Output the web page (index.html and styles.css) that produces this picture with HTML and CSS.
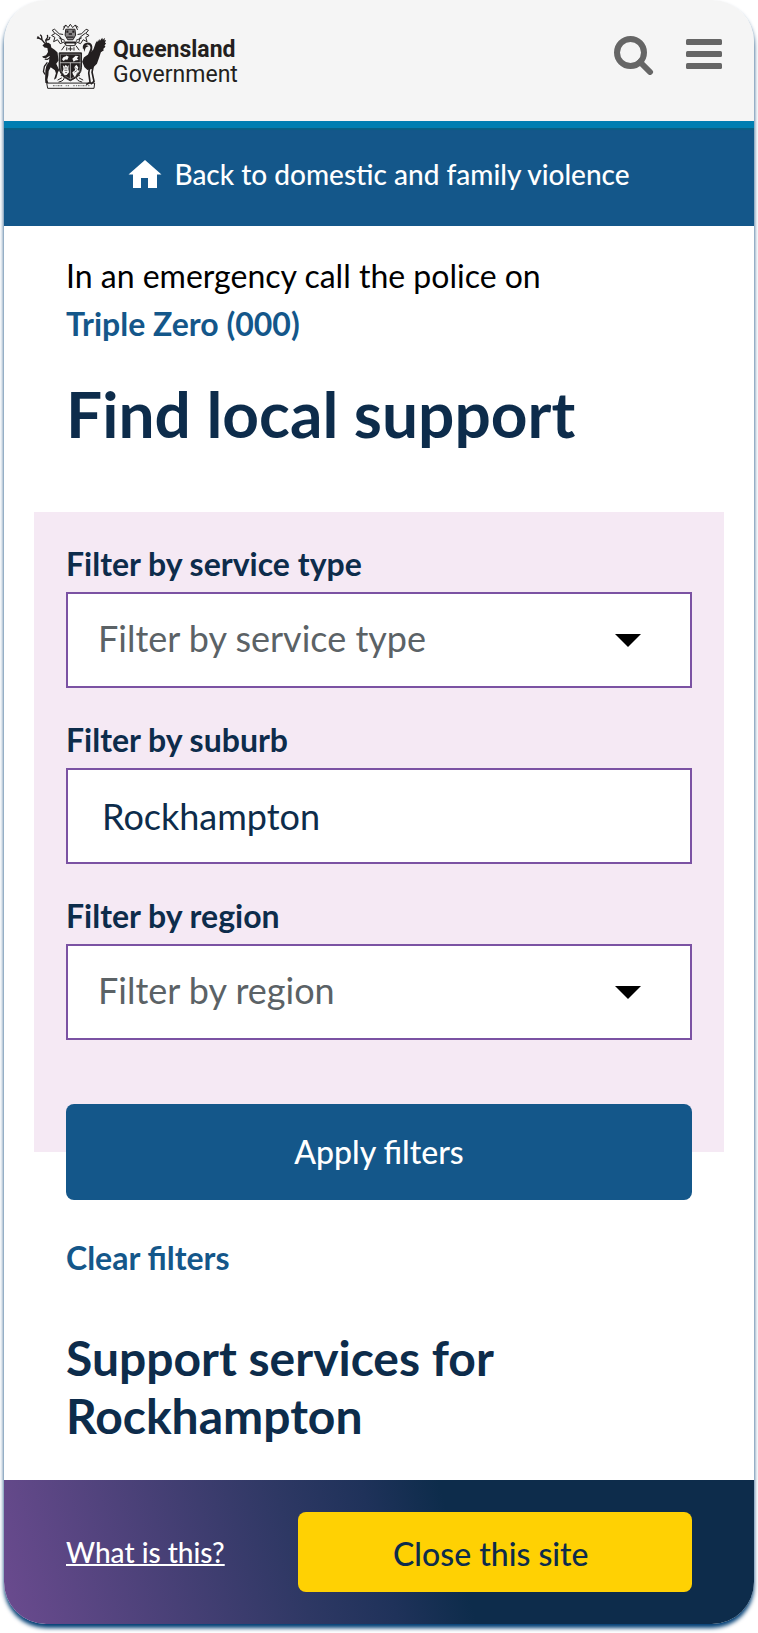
FILE: index.html
```html
<!DOCTYPE html>
<html lang="en">
<head>
  <meta charset="UTF-8">
  <meta name="viewport" content="width=device-width, initial-scale=1.0">
  <title>Find local support</title>
  <link rel="stylesheet" href="styles.css">
</head>
<body>
<div class="page">
  <header class="header">
    <a class="logo" href="#">
      <svg class="crest" viewBox="16 20 216 204" aria-hidden="true">
        <!-- crest and mantling -->
        <g fill="none" stroke="#231f20" stroke-width="3">
          <path d="M97 44l8-15 7 8 7-10 7 10 8-8 7 15M105 30l-8 6M134 30l9 6"/>
          <path d="M105 42h28l2 18-8 14h-16l-8-14z" fill="#8a8788"/>
          <path d="M97 58l-12-2-14-14-7 3 8 10-10 6 10 6-4 13 12-6 8 12 14-6 4 8M141 58l12-2 14-14 7 3-8 10 10 6-10 6 4 13-12-6-8 12-14-6-4 8"/>
          <path d="M73 54l16 12 4 16M165 54l-16 12-4 16M84 68l18 8M154 68l-18 8"/>
          <path d="M101 84h36l-5 8h-26zM102 92l-10 14M136 92l10 14M108 97v10M119 94v14M130 97v10M112 102h14"/>
        </g>
        <path d="M107 46h6v7h-6zM125 46h6v7h-6zM114 54h10v5h-10zM109 64h20v4h-20zM103 79h32v5h-32z" fill="#231f20"/>
        <!-- red deer -->
        <g fill="none" stroke="#231f20" stroke-width="4">
          <path d="M42 86l-9-11-8-5-6-6M33 75l-2-12-4-4M25 70l-8-1M46 85l-2-10 6-8-1-8M46 75l8-2 3-7"/>
        </g>
        <path d="M34 91l9-7 9-1 7 5 2 10 11 7 8 8 3 24-7 10 9 19-4 8-5 17-7 5 6-20-3-9-13-9-6 11-1 13-3 14 3 10h-9l-1-11 1-28 3-14 8-12 2-18-12 7-8-1-3-4 12-4 6-10-2-12-9-1z" fill="#231f20"/>
        <path d="M49 143l-9 12-3 16 5 9M61 126l-12 8-8-1" fill="none" stroke="#231f20" stroke-width="4"/>
        <!-- brolga -->
        <path d="M160 101q-2-13 9-15 12-2 14 10 1 8-4 16-5 9-1 15" fill="none" stroke="#231f20" stroke-width="6"/>
        <path d="M159 96l6-6 10 3-9 5-5 13z" fill="#231f20"/>
        <path d="M174 118l15-14 7-20 5-8 1 6 5-10 2 5 7-9 2 6 6-6-1 8 5-1-4 8 4 1-5 8 3 3-7 7 2 4-9 6-5 15-7 20-16 16-13 3-9-8-7-17 5-13z" fill="#231f20"/>
        <path d="M178 154l-3 22 4 28-12 6M189 151l-4 22 6 28-10 8" fill="none" stroke="#231f20" stroke-width="5"/>
        <!-- shield -->
        <path d="M85 114h68v44q0 26-34 41-34-15-34-41z" fill="#231f20" stroke="#231f20" stroke-width="3"/>
        <path d="M89 118h60v38q0 23-30 38-30-15-30-38z" fill="none" stroke="#999" stroke-width="2"/>
        <path d="M88 144h62M119 144v50" stroke="#f5f5f5" stroke-width="2"/>
        <path d="M94 135q2-10 10-10l3-3 7 4-4 9-7-1-4 5zM125 132l10-9 9 1-5 6 5 6-10 1-5 4z" fill="#f5f5f5"/>
        <path d="M96 151l5 5 4-6 5 6 4-5-1 12 2 10-7 8h-7l-6-8 3-10zM127 180l-2-7 9-7-3-8 6-8 6 8-2 8 6 3-8 7-6 12z" fill="#f5f5f5"/>
        <path d="M101 160h9M101 167h9M103 174h6M133 158l7 7M131 173l8-5" stroke="#231f20" stroke-width="2"/>
        <!-- scroll -->
        <g fill="none" stroke="#231f20" stroke-width="3">
          <path d="M83 203q18-4 17-14-1-7-10-6M80 197l13-7M155 203q-18-4-17-14 1-7 10-6M158 197l-13-7"/>
          <path d="M47 206h146l-2 16H50z"/>
          <path d="M66 214h5M74 214h3M80 214h6M89 214h5M105 214h3M111 214h4M128 214h4M136 214h3M142 214h5M150 214h3M156 214h6M165 214h4M173 214h4" stroke="#777" stroke-width="4"/>
        </g>
      </svg>
      <span class="logo-text">
        <strong>Queensland</strong>
        <span>Government</span>
      </span>
    </a>
    <div class="header-actions">
      <button class="icon-button" type="button" aria-label="Search">
        <svg width="40" height="40" viewBox="0 0 40 40" fill="none" stroke="#666" stroke-width="6" aria-hidden="true">
          <circle cx="16.500" cy="17.500" r="13.500"/>
          <path d="M26 27l10 10" stroke-linecap="round"/>
        </svg>
      </button>
      <button class="icon-button" type="button" aria-label="Menu">
        <svg width="36" height="40" viewBox="0 0 36 40" fill="#666" aria-hidden="true">
          <rect y="4" width="36" height="6" rx="1.500"/>
          <rect y="16" width="36" height="6" rx="1.500"/>
          <rect y="28" width="36" height="6" rx="1.500"/>
        </svg>
      </button>
    </div>
  </header>

  <nav class="back-bar">
    <a class="back-link" href="#">
      <svg width="34" height="30" viewBox="0 0 34 30" aria-hidden="true">
        <path d="M17 1L.5 15.500H5V29h8V19h7v10h9V15.500h4.500z" fill="#fff"/>
      </svg>
      Back to domestic and family violence
    </a>
  </nav>

  <main class="main">
    <p class="emergency">In an emergency call the police on<br><a href="tel:000">Triple Zero (000)</a></p>
    <h1>Find local support</h1>

    <form class="filters">
      <div class="field">
        <label for="service">Filter by service type</label>
        <div class="select-wrap">
          <select id="service">
            <option>Filter by service type</option>
          </select>
          <svg class="arrow" viewBox="0 0 26 13" aria-hidden="true"><path d="M0 0h26L13 13z"/></svg>
        </div>
      </div>
      <div class="field">
        <label for="suburb">Filter by suburb</label>
        <input type="text" id="suburb" value="Rockhampton">
      </div>
      <div class="field">
        <label for="region">Filter by region</label>
        <div class="select-wrap">
          <select id="region">
            <option>Filter by region</option>
          </select>
          <svg class="arrow" viewBox="0 0 26 13" aria-hidden="true"><path d="M0 0h26L13 13z"/></svg>
        </div>
      </div>
      <button class="apply" type="submit">Apply filters</button>
    </form>

    <a class="clear" href="#">Clear filters</a>
    <h2>Support services for Rockhampton</h2>
  </main>

  <footer class="exit-bar">
    <a href="#">What is this?</a>
    <button class="close-site" type="button">Close this site</button>
  </footer>
</div>
</body>
</html>
```
FILE: styles.css
```css
* {
    box-sizing: border-box;
}
body {
    margin: 0;
    padding: 0 4px 9px;
    background: #fff;
    color: #000;
    font-family: Lato, "Liberation Sans", sans-serif;
    font-size: 32px;
}
.page {
    border-radius: 42px;
    overflow: hidden;
    background: #fff;
    box-shadow: 0 4px 4px #003e74;
}
button, input, select {
    font-family: inherit;
}

/* header */
.header {
    display: flex;
    justify-content: space-between;
    align-items: flex-start;
    padding: 22px 32px 32px;
    background: #f5f5f5;
    border-bottom: 7px solid #007eb1;
}
.logo {
    display: flex;
    gap: 5px;
    color: #231f20;
    text-decoration: none;
}
.crest {
    width: 72px;
    height: 67px;
}
.logo-text {
    display: flex;
    flex-direction: column;
    padding-top: 15px;
    font-family: Roboto, "Open Sans", sans-serif;
    font-size: 23px;
    line-height: 25px;
}
.header-actions {
    display: flex;
    gap: 32px;
    padding-top: 13px;
}
.icon-button {
    padding: 0;
    border: 0;
    background: none;
}
.icon-button svg {
    display: block;
}

.back-bar {
    display: flex;
    justify-content: center;
    padding: 29px 32px 35px;
    background: #14578a;
    box-shadow: inset 0 2px 1px #0a5f83;
}
.back-link {
    display: flex;
    align-items: center;
    gap: 12px;
    color: #fff;
    font-size: 28px;
    font-weight: 500;
    line-height: 34px;
    text-decoration: none;
}

/* content */
.main {
    padding: 26px 30px 35px;
    color: #0d2c4b;
}
.emergency, h1, h2, .clear {
    margin: 0 32px;
}
.emergency {
    color: #000;
    line-height: 48px;
}
.emergency a, .clear {
    color: #14578a;
    font-weight: bold;
    text-decoration: none;
}
h1 {
    margin-top: 27px;
    font-size: 64px;
    line-height: 78px;
}
h2 {
    margin-top: 52px;
    font-size: 48px;
    line-height: 58px;
}
.filters {
    display: flex;
    flex-direction: column;
    gap: 33px;
    margin-top: 59px;
    padding: 33px 32px 0;
    background: #f5e9f4;
}
.field {
    display: flex;
    flex-direction: column;
    gap: 9px;
}
label {
    font-weight: bold;
    line-height: 38px;
}
input, select {
    display: block;
    width: 100%;
    height: 96px;
    border: 2px solid #7b52a3;
    border-radius: 0;
    background: #fff;
    font-size: 36px;
}
input {
    padding: 0 34px;
    color: #0d2c4b;
}
select {
    appearance: none;
    padding: 0 80px 4px 30px;
    color: #5b6266;
}
.select-wrap {
    position: relative;
}
.arrow {
    position: absolute;
    top: 42px;
    right: 51px;
    width: 26px;
    height: 13px;
    pointer-events: none;
}
.apply {
    height: 96px;
    margin: 31px 0 -48px;
    padding: 0 0 2px;
    border: 0;
    border-radius: 8px;
    background: #14578a;
    color: #fff;
    font-size: 32px;
    font-weight: 500;
}
.clear {
    display: block;
    margin-top: 87px;
    line-height: 38px;
}

/* quick exit */
.exit-bar {
    display: flex;
    justify-content: space-between;
    align-items: center;
    padding: 32px 62px;
    background: linear-gradient(75deg, #6b4b8f, #2e3864 39%, #1f325a 50%, #0d2c4b 60%);
}
.exit-bar a {
    color: #fff;
    font-size: 28px;
    font-weight: 500;
    text-decoration-thickness: 2px;
}
.close-site {
    width: 63%;
    height: 80px;
    padding: 2px 8px 0 0;
    border: 0;
    border-radius: 8px;
    background: #ffd103;
    color: #0d2c4b;
    font-size: 32px;
    font-weight: 500;
}
```
